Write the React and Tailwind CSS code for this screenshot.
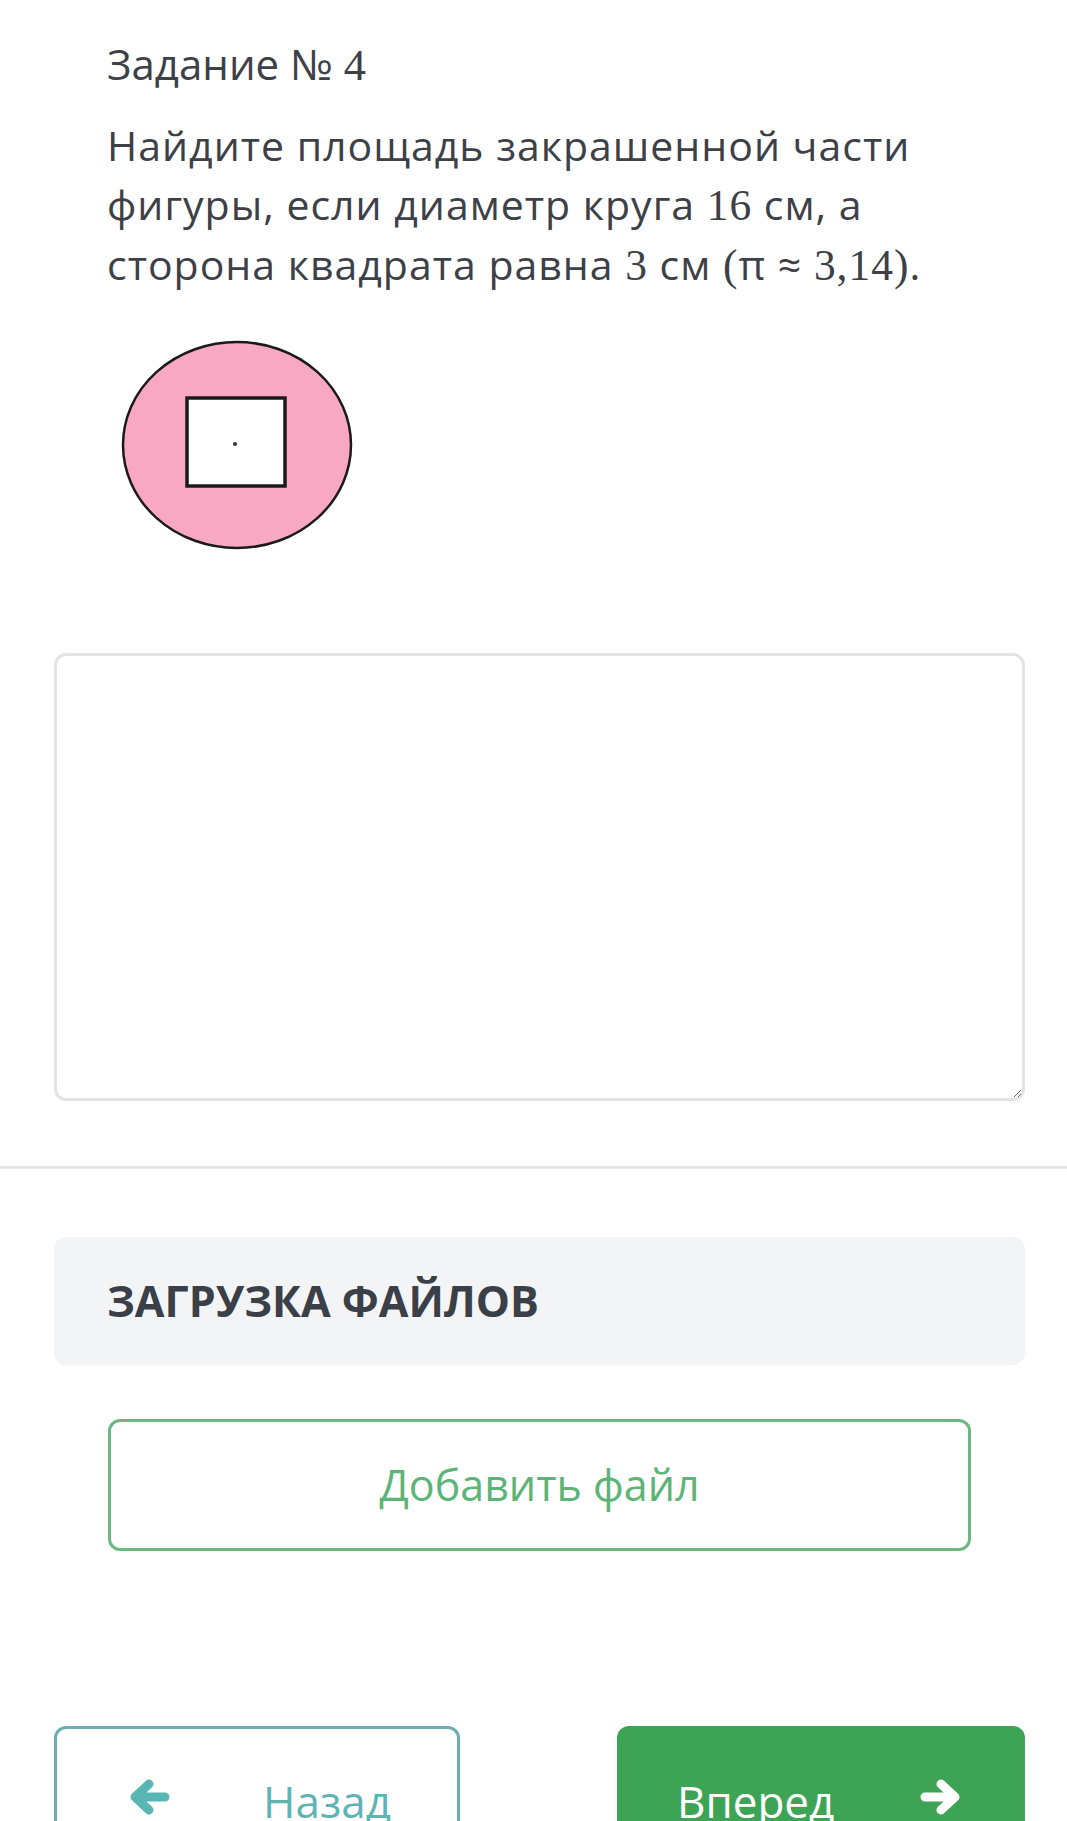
const serif = "font-['Liberation_Serif',serif] text-[1.06em]"

function Figure() {
  return (
    <svg width="240" height="216" viewBox="0 0 240 216" className="block">
      <ellipse cx="117" cy="106" rx="114" ry="103" fill="#f9a8c4" stroke="#1a1a1a" strokeWidth="2.5" />
      <rect x="67" y="59" width="98" height="88" fill="#fff" stroke="#1a1a1a" strokeWidth="3.5" />
      <circle cx="115" cy="105" r="2" fill="#333" />
    </svg>
  )
}

function Arrow({ dir, className }) {
  const d = dir === "left" ? "M38 19H10M22 6L8 19L22 32" : "M6 19H34M22 6L36 19L22 32"
  return (
    <svg width="44" height="38" viewBox="0 0 44 38" className={className}>
      <path d={d} fill="none" stroke="currentColor" strokeWidth="9" strokeLinecap="round" strokeLinejoin="round" />
    </svg>
  )
}

export default function App() {
  return (
    <div className="w-[1067px] min-h-[1821px] bg-white overflow-hidden font-['Open_Sans',sans-serif] text-[#3d4147]">
      <div className="pl-[54px] pr-[42px] pt-[35px]">
        <div className="pl-[53px] pr-[40px]">
          <h2 className="text-[42px] leading-[57px] font-normal">
            Задание № <span className={serif}>4</span>
          </h2>
          <p className="mt-[22px] text-[41px] leading-[59px] tracking-[1px]">
            Найдите площадь закрашенной части фигуры, если диаметр круга{" "}
            <span className={serif}>16</span> см, а сторона квадрата равна{" "}
            <span className={serif}>3</span> см <span className={serif}>(</span>π ≈{" "}
            <span className={serif}>3,14)</span>.
          </p>
          <div className="mt-[44px] ml-[13px]">
            <Figure />
          </div>
        </div>

        <textarea className="mt-[98px] block w-full h-[448px] border-[3px] border-[#e3e3e3] rounded-xl outline-none" />
      </div>

      <div className="mt-[65px] h-[3px] bg-[#e6e6e6]" />

      <div className="pl-[54px] pr-[42px] pt-[68px]">
        <div className="h-[128px] bg-[#f3f4f6] rounded-xl flex items-center pl-[53px]">
          <h3 className="text-[43px] font-bold text-[#3a3f48]">ЗАГРУЗКА ФАЙЛОВ</h3>
        </div>

        <div className="px-[54px] mt-[54px]">
          <button className="w-full h-[132px] border-[3px] border-[#6cb880] rounded-xl text-[43px] text-[#5cb476]">
            Добавить файл
          </button>
        </div>

        <div className="mt-[175px] flex justify-between">
          <button className="w-[406px] h-[150px] border-[3px] border-[#6aaeb0] rounded-xl flex items-center justify-between pl-[70px] pr-[66px] text-[#5fb3b3] text-[44px]">
            <Arrow dir="left" className="text-[#5ab6b4] -mt-[8px]" />
            <span>Назад</span>
          </button>
          <button className="w-[408px] h-[150px] bg-[#3da456] rounded-xl flex items-center justify-between pl-[60px] pr-[62px] text-white text-[44px]">
            <span>Вперед</span>
            <Arrow dir="right" className="-mt-[8px]" />
          </button>
        </div>
      </div>
    </div>
  )
}
